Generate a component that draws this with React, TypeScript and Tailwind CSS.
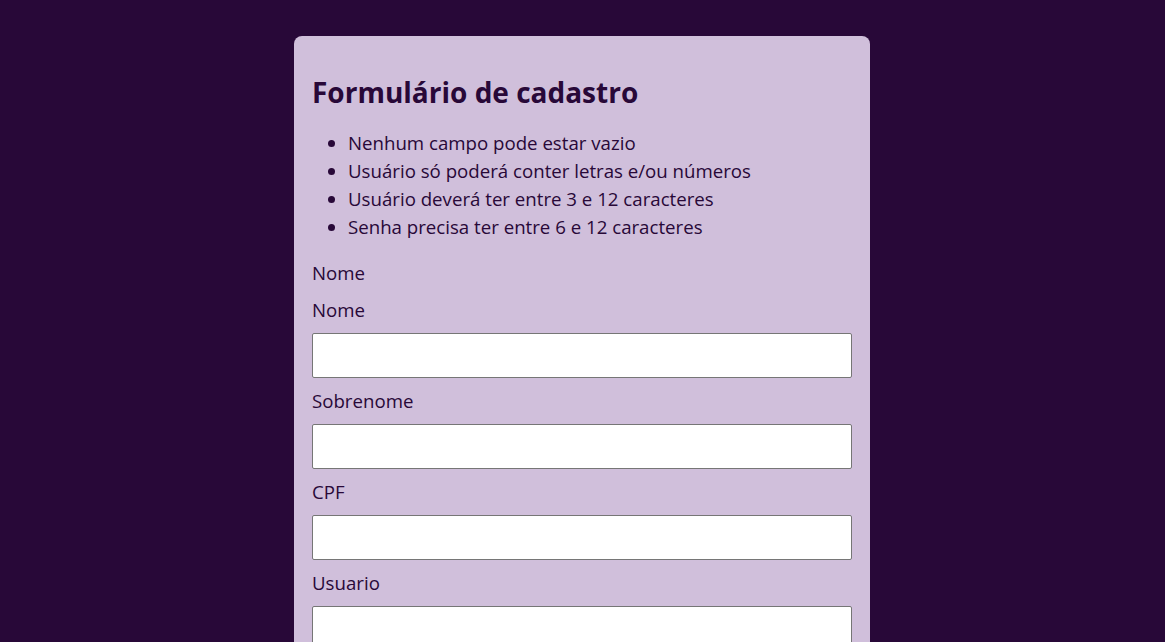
import React from 'react';

const rules = [
  'Nenhum campo pode estar vazio',
  'Usuário só poderá conter letras e/ou números',
  'Usuário deverá ter entre 3 e 12 caracteres',
  'Senha precisa ter entre 6 e 12 caracteres',
];

const fields = ['Nome', 'Sobrenome', 'CPF', 'Usuario', 'Senha'];

export default function App() {
  return (
    <div
      className="min-h-screen bg-[#280838] flex justify-center pt-[36px] pr-px text-[#280838]"
      style={{ fontFamily: '"Open Sans", sans-serif' }}
    >
      <div className="w-[576px] bg-[#d0bfdb] rounded-[8px] px-[18px] pt-[37px] pb-[18px] self-start">
        {/* Title */}
        <h1 className="text-[28px] leading-[38px] font-bold">Formulário de cadastro</h1>

        {/* Rules */}
        <ul className="mt-[18px] pl-[36px] list-disc text-[18.67px] leading-[28px]">
          {rules.map((r) => (
            <li key={r}>{r}</li>
          ))}
        </ul>

        {/* Form */}
        <form className="mt-[18px] flex flex-col gap-[9px] text-[18.67px] leading-[28px]">
          <span>Nome</span>
          {fields.map((f) => (
            <React.Fragment key={f}>
              <label htmlFor={f}>{f}</label>
              <input
                id={f}
                type={f === 'Senha' ? 'password' : 'text'}
                className="h-[45px] w-full bg-white border border-[#767676] rounded-[2px] px-2 outline-none"
              />
            </React.Fragment>
          ))}
        </form>
      </div>
    </div>
  );
}
